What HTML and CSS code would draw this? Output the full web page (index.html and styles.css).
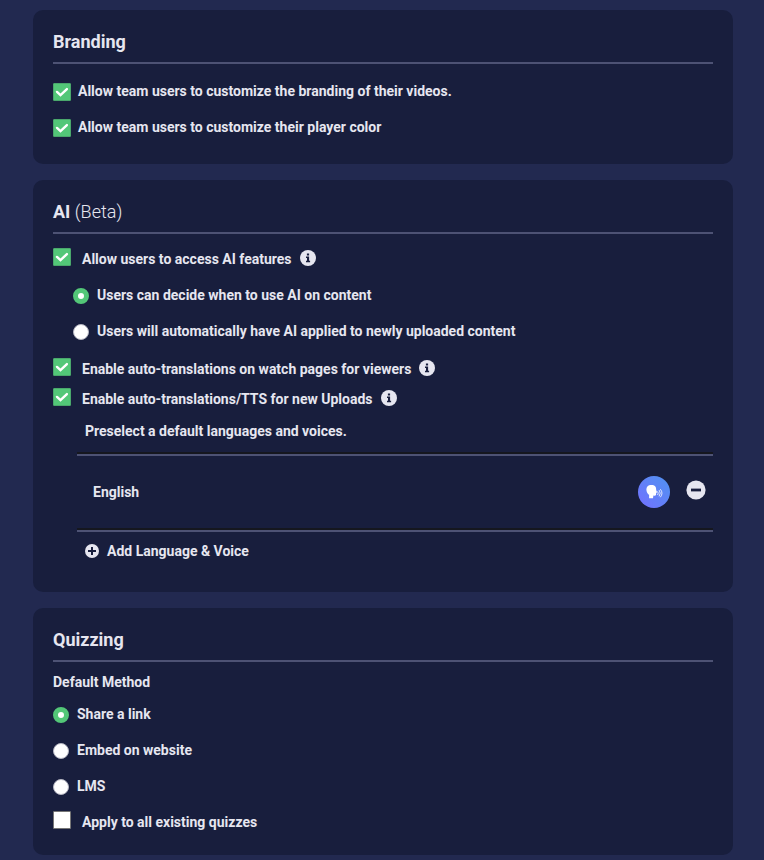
FILE: index.html
```html
<!DOCTYPE html>
<html lang="en">
<head>
  <meta charset="UTF-8">
  <meta name="viewport" content="width=device-width, initial-scale=1.0">
  <title>Team Settings</title>
  <link rel="stylesheet" href="styles.css">
</head>
<body>
  <main class="settings">
    <section class="card">
      <h2>Branding</h2>
      <div class="options">
        <label class="option"><input type="checkbox" class="check" checked> Allow team users to customize the branding of their videos.</label>
        <label class="option"><input type="checkbox" class="check" checked> Allow team users to customize their player color</label>
      </div>
    </section>

    <section class="card">
      <h2>AI <span class="beta">(Beta)</span></h2>
      <div class="features">
        <div class="feature">
          <input type="checkbox" class="check" id="aiAccess" checked>
          <label for="aiAccess">Allow users to access AI features</label>
          <svg class="info" viewBox="0 0 16 16" role="img" aria-label="Info"><circle cx="8" cy="8" r="8" fill="#e6e6f0"/><path d="M6.9 3.4h2.2v2H6.9zM6 6.5h3.1v4.2h1v1.6H6v-1.6h1V8.1H6z" fill="#181e3d"/></svg>
        </div>
        <div class="options nested">
          <label class="option"><input type="radio" class="radio" name="aiMode" checked> Users can decide when to use AI on content</label>
          <label class="option"><input type="radio" class="radio" name="aiMode"> Users will automatically have AI applied to newly uploaded content</label>
        </div>
        <div class="feature">
          <input type="checkbox" class="check" id="watchPages" checked>
          <label for="watchPages">Enable auto-translations on watch pages for viewers</label>
          <svg class="info" viewBox="0 0 16 16" role="img" aria-label="Info"><circle cx="8" cy="8" r="8" fill="#e6e6f0"/><path d="M6.9 3.4h2.2v2H6.9zM6 6.5h3.1v4.2h1v1.6H6v-1.6h1V8.1H6z" fill="#181e3d"/></svg>
        </div>
        <div class="feature">
          <input type="checkbox" class="check" id="newUploads" checked>
          <label for="newUploads">Enable auto-translations/TTS for new Uploads</label>
          <svg class="info" viewBox="0 0 16 16" role="img" aria-label="Info"><circle cx="8" cy="8" r="8" fill="#e6e6f0"/><path d="M6.9 3.4h2.2v2H6.9zM6 6.5h3.1v4.2h1v1.6H6v-1.6h1V8.1H6z" fill="#181e3d"/></svg>
        </div>
      </div>
      <div class="languages">
        <p>Preselect a default languages and voices.</p>
        <hr>
        <div class="language">
          <span class="name">English</span>
          <button type="button" class="voice" aria-label="Choose voice">
            <svg viewBox="0 0 32 32" width="32" height="32">
              <path d="M9.400 10.400c1.800-1.800 6.200-2 7.900.1.800 1 .9 2.400.9 3.500l.9 2.400-1 .4v1.800c0 .8-.6 1.200-1.500 1.100l-1.200-.1-.4 2.600h-3.900v-3.400C8.700 17.300 7.400 12.900 9.400 10.400z" fill="#fff"/>
              <path d="M19.800 15.700q1 1.500 0 3M21.300 14.400q2.100 2.800 0 5.600M22.600 13.500q3 3.700 0 7.400" fill="none" stroke="#fff" stroke-width=".8" stroke-linecap="round"/>
            </svg>
          </button>
          <button type="button" class="remove" aria-label="Remove English">
            <svg viewBox="0 0 20 20" width="20" height="20"><circle cx="10" cy="10" r="9.600" fill="#e6e6f0"/><path d="M5 8.600h10v2.800H5z" fill="#181e3d"/></svg>
          </button>
        </div>
        <hr>
        <button type="button" class="add">
          <svg viewBox="0 0 14 14" width="14" height="14"><circle cx="7" cy="7" r="7" fill="#e6e6f0"/><path d="M7 3v8M3 7h8" stroke="#181e3d" stroke-width="2"/></svg>
          Add Language &amp; Voice
        </button>
      </div>
    </section>

    <section class="card">
      <h2>Quizzing</h2>
      <fieldset class="method">
        <legend>Default Method</legend>
        <div class="options">
          <label class="option"><input type="radio" class="radio" name="method" checked> Share a link</label>
          <label class="option"><input type="radio" class="radio" name="method"> Embed on website</label>
          <label class="option"><input type="radio" class="radio" name="method"> LMS</label>
        </div>
      </fieldset>
      <div class="feature apply">
        <input type="checkbox" class="check" id="applyAll">
        <label for="applyAll">Apply to all existing quizzes</label>
      </div>
    </section>
  </main>
</body>
</html>
```

FILE: styles.css
```css
* {
  box-sizing: border-box;
}
body {
  margin: 0;
  background-color: #222950;
  color: #e6e6f0;
  font-family: Roboto, sans-serif;
  font-size: 14px;
  font-weight: 700;
  line-height: 22px;
}
.settings {
  display: flex;
  flex-direction: column;
  gap: 16px;
  padding: 10px 31px 5px 33px;
}
.card {
  padding: 20px 20px 18px;
  background-color: #181e3d;
  border-radius: 10px;
}
h2 {
  margin: 0 0 10px;
  padding-bottom: 8px;
  border-bottom: 2px solid #4d5274;
  font-size: 18px;
  font-weight: 700;
  line-height: 24px;
}
.beta {
  font-weight: 300;
}
.option {
  display: flex;
  align-items: flex-start;
  padding: 6px 0 8px;
}
.option .check {
  margin: 3px 7px 0 0;
}
.option .radio {
  margin: 4px 8px 0 0;
}
.check,
.radio {
  appearance: none;
  flex-shrink: 0;
  margin: 0;
  background: #fff;
}
.check {
  width: 18px;
  height: 18px;
  border: 1px solid #767676;
  border-radius: 1px;
}
.check:checked {
  background: #53c778 url("data:image/svg+xml,%3Csvg xmlns='http://www.w3.org/2000/svg' viewBox='0 0 16 16'%3E%3Cpath d='M3 7.900l3.500 3.200 6.400-6' fill='none' stroke='white' stroke-width='2.400' stroke-linecap='round'/%3E%3C/svg%3E") center / 16px 16px no-repeat;
  border-color: #4aa86c;
}
.radio {
  width: 16px;
  height: 16px;
  border: 1px solid #b5b6c2;
  border-radius: 50%;
}
.radio:checked {
  border: 5px solid #53c778;
}
.features {
  padding-top: 4px;
}
.feature {
  display: flex;
  align-items: flex-start;
  margin-bottom: 8px;
}
.feature .check {
  margin-right: 11px;
}
.apply {
  margin-bottom: 4px;
}
.info {
  width: 16px;
  height: 16px;
  margin: 2px 0 0 8px;
}
.nested {
  padding: 0 0 8px 20px;
}
.languages {
  padding-left: 24px;
}
.languages p {
  margin: 0 0 8px;
  padding: 2px 8px;
}
hr {
  height: 4px;
  margin: 0;
  border: 0;
  border-top: 2px solid #15171f;
  background-color: #4d5274;
}
.language {
  display: flex;
  align-items: center;
  height: 72px;
  padding: 0 7px 0 16px;
}
.name {
  flex: 1;
}
button {
  padding: 0;
  border: 0;
  background: none;
  color: inherit;
  font: inherit;
  cursor: pointer;
}
button svg {
  display: block;
}
.voice {
  width: 32px;
  height: 32px;
  margin-right: 16px;
  border-radius: 50%;
  background: linear-gradient(45deg, #7370ff, #4f93f0);
}
.remove {
  padding-bottom: 4px;
}
.add {
  display: flex;
  align-items: center;
  gap: 8px;
  margin-bottom: 4px;
  padding: 8px;
}
.method {
  margin: 0;
  padding: 0 0 6px;
  border: 0;
}
.method legend {
  padding: 0 0 5px;
  line-height: 20px;
}
```
